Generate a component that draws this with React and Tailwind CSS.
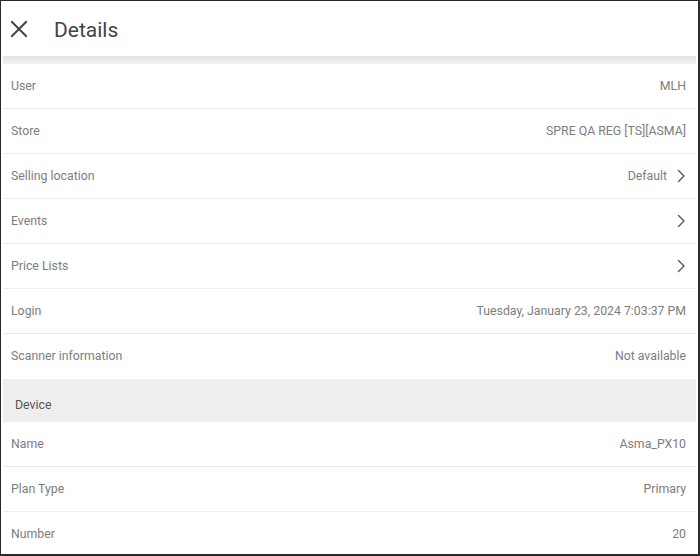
import React from "react";

const Chevron = () => (
  <svg width="10" height="14" viewBox="0 0 10 14" className="ml-[9px]">
    <path d="M2.5 1.5 L8 7 L2.5 12.5" fill="none" stroke="#555" strokeWidth="1.4" strokeLinecap="round" strokeLinejoin="round" />
  </svg>
);

function Row({ label, value, chevron, last }) {
  return (
    <div className={"flex items-center justify-between h-[45px] shrink-0 pl-[8px] pr-[10px] mx-[2px] " + (last ? "" : "border-b border-[#ececec]")}>
      <span className="text-[12.3px] text-[#7d7d7d]">{label}</span>
      <div className="flex items-center">
        {value && <span className="text-[12.3px] text-[#7d7d7d]">{value}</span>}
        {chevron && <Chevron />}
      </div>
    </div>
  );
}

export default function App() {
  return (
    <div
      className="w-[700px] h-[556px] bg-white border border-[#2a2a2a] border-r-2 border-b-2 overflow-hidden flex flex-col"
      style={{ fontFamily: "Roboto, 'Liberation Sans', sans-serif" }}
    >
      <div className="h-[55px] flex items-center shrink-0 bg-white">
        <svg width="18" height="18" viewBox="0 0 18 18" className="ml-[9px] mt-[1px]">
          <path d="M2 2 L16 16 M16 2 L2 16" stroke="#444" strokeWidth="2" strokeLinecap="square" />
        </svg>
        <span className="ml-[26px] text-[21px] text-[#444] mt-[4px]">Details</span>
      </div>
      <div className="h-[8px] mx-[2px] shrink-0 bg-gradient-to-b from-[#e2e2e2] to-[#f2f2f2]" />
      <Row label="User" value="MLH" />
      <Row label="Store" value="SPRE QA REG [TS][ASMA]" />
      <Row label="Selling location" value="Default" chevron />
      <Row label="Events" chevron />
      <Row label="Price Lists" chevron />
      <Row label="Login" value="Tuesday, January 23, 2024 7:03:37 PM" />
      <Row label="Scanner information" value="Not available" last />
      <div className="h-[43px] mx-[2px] bg-[#eeeeee] flex items-center pl-[12px] pt-[10px] shrink-0">
        <span className="text-[12.3px] text-[#555]">Device</span>
      </div>
      <Row label="Name" value="Asma_PX10" />
      <Row label="Plan Type" value="Primary" />
      <Row label="Number" value="20" last />
    </div>
  );
}
